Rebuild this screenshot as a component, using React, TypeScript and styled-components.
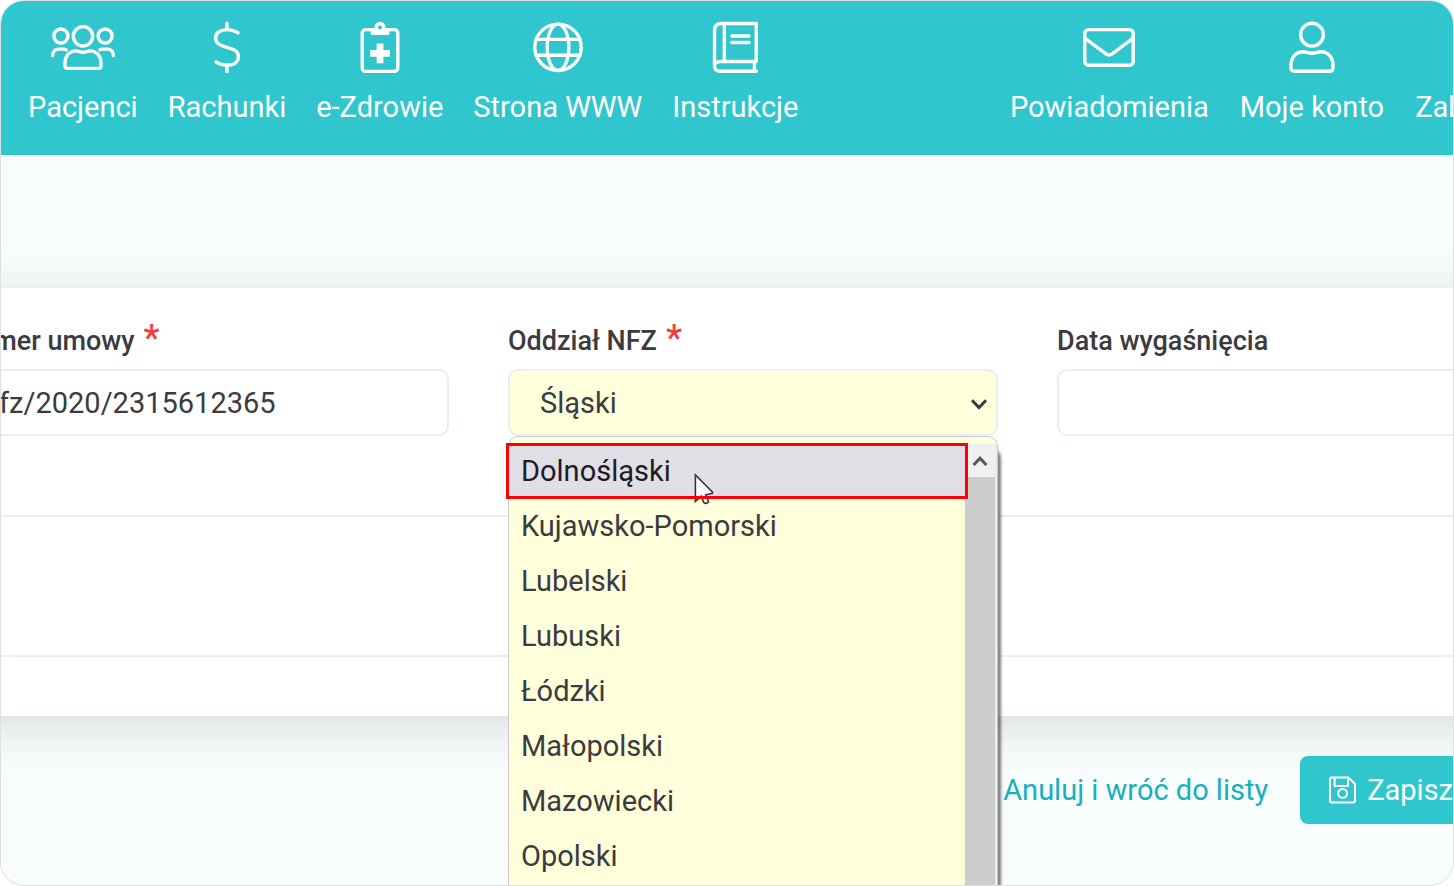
import React from "react";
import styled, { createGlobalStyle } from "styled-components";

const teal = "#2fc6ce";
const ink = "#3b3b40";
const cream = "#ffffdb";
const line = "#e9eef3";

const GlobalStyle = createGlobalStyle`
  *, *::before, *::after { box-sizing: border-box; }
  body {
    margin: 0;
    background: #fff;
    color: ${ink};
    font-family: Roboto, "Liberation Sans", sans-serif;
    font-size: 29px;
    line-height: 36px;
  }
  button, input, select { font: inherit; color: inherit; }
`;

const Frame = styled.div`
  display: flex;
  flex-direction: column;
  min-height: 100vh;
  overflow: hidden;
  position: relative;
  border: 1px solid #dfe0e1;
  border-radius: 24px;
  background: #f8fcfd;
`;

const Header = styled.header`
  display: flex;
  justify-content: space-between;
  padding: 20px 0 30px 27px;
  background: ${teal};
  color: #fff;
`;

const Nav = styled.nav<{ $gap: number; $bleed?: number }>`
  display: flex;
  gap: ${(p) => p.$gap}px;
  margin-right: ${(p) => -(p.$bleed ?? 0)}px;
`;

const NavItem = styled.a`
  display: flex;
  flex-direction: column;
  align-items: center;
  gap: 16px;
  color: inherit;
  text-decoration: none;
  white-space: nowrap;
`;

const NavIconBox = styled.span`
  display: flex;
  height: 52px;
`;

const LineIcon = styled.svg<{ $stroke?: number }>`
  display: block;
  fill: none;
  stroke: currentColor;
  stroke-width: ${(p) => p.$stroke ?? 3.4};
  stroke-linecap: round;
  stroke-linejoin: round;
`;

const Main = styled.main`
  padding-top: 133px;
`;

const Card = styled.section`
  margin: 0 -154px 0 -102px;
  padding: 0 60px;
  background: #fff;
  box-shadow: 0 10px 48px rgba(0, 0, 0, 0.13);
`;

const FieldRow = styled.div`
  display: grid;
  grid-template-columns: repeat(3, minmax(0, 1fr));
  gap: 59px;
  padding: 37px 0 79px;
  border-bottom: 2px solid ${line};
`;

const EmptyRow = styled.div`
  height: 140px;
  border-bottom: 2px solid ${line};
`;

const CardFoot = styled.div`
  height: 59px;
`;

const Field = styled.div`
  display: flex;
  flex-direction: column;
  gap: 12px;
`;

const Label = styled.label`
  display: flex;
  gap: 9px;
  height: 32px;
  line-height: 32px;
  font-size: 27px;
  font-weight: 500;
  white-space: nowrap;
`;

const Required = styled.span`
  color: #f0403c;
  font-size: 36px;
  line-height: 26px;
`;

const Control = styled.div`
  position: relative;
`;

const TextInput = styled.input`
  display: block;
  width: 100%;
  height: 67px;
  padding: 0 22px;
  border: 2px solid ${line};
  border-radius: 10px;
  background: #fff;
  outline: none;
`;

const Select = styled.select`
  display: block;
  width: 100%;
  height: 67px;
  padding: 0 30px;
  border: 2px solid ${line};
  border-radius: 10px;
  background: ${cream};
  appearance: none;
  outline: none;
`;

const SelectArrow = styled.svg`
  position: absolute;
  right: 10px;
  top: 28px;
  pointer-events: none;
`;

const Popup = styled.div`
  position: absolute;
  z-index: 2;
  top: 100%;
  left: 0;
  right: 0;
  display: flex;
  padding: 7px 2px 0 0;
  border: 1px solid #c9cad0;
  border-radius: 10px 10px 0 0;
  background: linear-gradient(${cream} 8px, #ececec 8px);
  box-shadow: 3px 12px 3px rgba(0, 0, 0, 0.5);
`;

const Options = styled.ul`
  flex: 1;
  margin: 0;
  padding: 0 0 24px;
  list-style: none;
  background: ${cream};
`;

const Option = styled.li<{ $active: boolean }>`
  position: relative;
  height: 55px;
  padding-left: 12px;
  line-height: 55px;
  color: ${(p) => (p.$active ? "#1c1b26" : ink)};
  background: ${(p) => (p.$active ? "#e0dfe6" : "transparent")};
`;

const Highlight = styled.span`
  position: absolute;
  inset: -1px -3px 0;
  border: 3px solid #fb0007;
`;

const Pointer = styled.svg`
  position: absolute;
  left: 185px;
  top: 29px;
`;

const ScrollTrack = styled.div`
  display: flex;
  flex-direction: column;
  width: 30px;
  background: #cdcdcd;
`;

const ScrollUp = styled.button`
  display: flex;
  align-items: center;
  justify-content: center;
  height: 33px;
  padding: 0;
  border: 0;
  background: #f0f0f0;
`;

const Actions = styled.div`
  display: flex;
  justify-content: flex-end;
  align-items: center;
  gap: 32px;
  margin-right: -28px;
  padding-top: 40px;
`;

const CancelLink = styled.a`
  color: #16b1bb;
  text-decoration: none;
  white-space: nowrap;
`;

const SaveButton = styled.button`
  display: flex;
  align-items: center;
  gap: 11px;
  height: 68px;
  padding: 0 28px;
  border: 0;
  border-radius: 8px;
  background: ${teal};
  color: #fff;
`;

const UsersIcon = () => (
  <LineIcon width="66" height="52" viewBox="0 0 66 52" aria-hidden="true">
    <circle cx="33" cy="15.3" r="9.7" />
    <circle cx="10.9" cy="15" r="7" />
    <circle cx="55.1" cy="15" r="7" />
    <path d="M2.6 34.6C2.6 30.6 5 28.1 8.6 28.1H13.4q1.6 0 2.8.6M63.4 34.6c0-4-2.4-6.5-6-6.5H52.6q-1.6 0-2.8.6" />
    <path d="M15 45V42.2C15 34.6 19.6 29.9 26 29.9c2.6 0 4 1.3 7 1.3s4.4-1.3 7-1.3c6.4 0 11 4.7 11 12.3V45q0 2.4-2.4 2.4H17.4Q15 47.4 15 45Z" />
  </LineIcon>
);

const DollarIcon = () => (
  <LineIcon width="30" height="52" viewBox="0 0 30 52" aria-hidden="true">
    <path d="M15 2.2V8.4M15 44.2V50.6" />
    <path d="M26 11.8C22.2 9.6 18.6 8.6 15 8.6 8 8.6 3.6 11.8 3.6 17c0 5.6 4.9 7.5 11.4 9.3 6.5 1.8 11.4 3.5 11.4 9.1 0 5.4-4.4 8.7-11.4 8.7-4.5 0-8-1.1-11-3.2" />
  </LineIcon>
);

const ClipboardIcon = () => (
  <LineIcon width="40" height="52" viewBox="0 0 40 52" aria-hidden="true">
    <rect x="2.2" y="8.6" width="35.6" height="41.8" rx="3.4" />
    <path d="M10.6 8h18.8v4.6q0 1.4-1.4 1.4H12q-1.4 0-1.4-1.4Z" fill="currentColor" stroke="none" />
    <circle cx="20" cy="6.4" r="4.6" fill="currentColor" strokeWidth="2" />
    <circle cx="20" cy="6.6" r="2" fill={teal} stroke="none" />
    <path d="M16.6 22.6h6.8v6.4h6.4v6.8h-6.4v6.4h-6.8v-6.4h-6.4V29h6.4Z" fill="currentColor" stroke="none" />
  </LineIcon>
);

const GlobeIcon = () => (
  <LineIcon width="50" height="52" viewBox="0 0 50 52" aria-hidden="true">
    <circle cx="25" cy="26.3" r="23.2" />
    <ellipse cx="25" cy="26.3" rx="10.8" ry="23.2" />
    <path d="M3.2 18.4H46.8M3.2 34.3H46.8" />
  </LineIcon>
);

const BookIcon = () => (
  <LineIcon width="46" height="52" viewBox="0 0 46 52" aria-hidden="true">
    <path d="M2.5 45V9.5q0-7 7-7H44.2V40.5H8.5q-6 0-6 4.8 0 5 6 5H44.2" />
    <path d="M12.3 2.5V40.5M42.4 40.5V50.3M19.8 15H37M19.8 21.5H37" />
  </LineIcon>
);

const EnvelopeIcon = () => (
  <LineIcon width="52" height="52" viewBox="0 0 52 52" aria-hidden="true">
    <rect x="1.8" y="8.6" width="48.4" height="35.6" rx="3.6" />
    <path d="M2.4 17.6 23 32.8q3 2.2 6 0L49.6 17.6" />
  </LineIcon>
);

const UserIcon = () => (
  <LineIcon width="46" height="52" viewBox="0 0 46 52" aria-hidden="true">
    <circle cx="23" cy="13.7" r="11.4" />
    <path d="M2 46.7V44.2C2 36 7.4 30.7 14 30.7c3.4 0 5 1.6 9 1.6s5.6-1.6 9-1.6c6.6 0 12 5.3 12 13.5v2.5q0 3.6-3.6 3.6H5.6Q2 50.3 2 46.7Z" />
  </LineIcon>
);

const SaveIcon = () => (
  <LineIcon $stroke={2} width="28" height="28" viewBox="0 0 28 28" aria-hidden="true">
    <path d="M4 1.4H20.4L27 8V24.6q0 2-2 2H4q-2 0-2-2V3.4q0-2 2-2Z" />
    <path d="M6.6 2V10H20V2" />
    <circle cx="14.6" cy="17.4" r="4.4" />
  </LineIcon>
);

const mainNav = [
  { label: "Pacjenci", Icon: UsersIcon },
  { label: "Rachunki", Icon: DollarIcon },
  { label: "e-Zdrowie", Icon: ClipboardIcon },
  { label: "Strona WWW", Icon: GlobeIcon },
  { label: "Instrukcje", Icon: BookIcon },
];

const userNav = [
  { label: "Powiadomienia", Icon: EnvelopeIcon },
  { label: "Moje konto", Icon: UserIcon },
  { label: "Zak", Icon: null },
];

const branches = [
  "Dolnośląski",
  "Kujawsko-Pomorski",
  "Lubelski",
  "Lubuski",
  "Łódzki",
  "Małopolski",
  "Mazowiecki",
  "Opolski",
];

export default function App() {
  return (
    <>
      <GlobalStyle />
      <Frame>
        <Header>
          <Nav $gap={30} aria-label="Menu">
            {mainNav.map(({ label, Icon }) => (
              <NavItem href="#" key={label}>
                <NavIconBox>
                  <Icon />
                </NavIconBox>
                {label}
              </NavItem>
            ))}
          </Nav>
          <Nav $gap={31} $bleed={10} aria-label="Konto">
            {userNav.map(({ label, Icon }) => (
              <NavItem href="#" key={label}>
                <NavIconBox>{Icon && <Icon />}</NavIconBox>
                {label}
              </NavItem>
            ))}
          </Nav>
        </Header>

        <Main>
          <Card>
            <FieldRow>
              <Field>
                <Label htmlFor="contract">
                  Numer umowy<Required>*</Required>
                </Label>
                <TextInput id="contract" defaultValue="nfz/2020/2315612365" />
              </Field>
              <Field>
                <Label htmlFor="branch">
                  Oddział NFZ<Required>*</Required>
                </Label>
                <Control>
                  <Select id="branch" defaultValue="Śląski">
                    <option>Śląski</option>
                  </Select>
                  <SelectArrow width="18" height="14" viewBox="0 0 18 14" aria-hidden="true">
                    <path d="M2 3.2 9 10.6 16 3.2" fill="none" stroke={ink} strokeWidth="3" />
                  </SelectArrow>
                  <Popup>
                    <Options role="listbox" aria-label="Oddział NFZ">
                      {branches.map((name, i) => (
                        <Option key={name} role="option" aria-selected={i === 0} $active={i === 0}>
                          {name}
                          {i === 0 && (
                            <>
                              <Pointer width="20" height="32" viewBox="0 0 20 32" aria-hidden="true">
                                <path
                                  d="M1.4 2V28.4L7.2 23.2 9.8 29.6q2.6 1.8 4.8-.8L11.8 21.8 18.4 20.4V19Z"
                                  fill="#fff"
                                  stroke="#33333b"
                                  strokeWidth="1.6"
                                />
                              </Pointer>
                              <Highlight />
                            </>
                          )}
                        </Option>
                      ))}
                    </Options>
                    <ScrollTrack>
                      <ScrollUp type="button" aria-label="Przewiń w górę">
                        <svg width="16" height="12" viewBox="0 0 16 12" aria-hidden="true">
                          <path d="M1.6 10 8 3.2 14.4 10" fill="none" stroke="#55555a" strokeWidth="3" />
                        </svg>
                      </ScrollUp>
                    </ScrollTrack>
                  </Popup>
                </Control>
              </Field>
              <Field>
                <Label htmlFor="expiry">Data wygaśnięcia</Label>
                <TextInput id="expiry" />
              </Field>
            </FieldRow>
            <EmptyRow />
            <CardFoot />
          </Card>
          <Actions>
            <CancelLink href="#">Anuluj i wróć do listy</CancelLink>
            <SaveButton type="button">
              <SaveIcon />
              Zapisz
            </SaveButton>
          </Actions>
        </Main>
      </Frame>
    </>
  );
}
